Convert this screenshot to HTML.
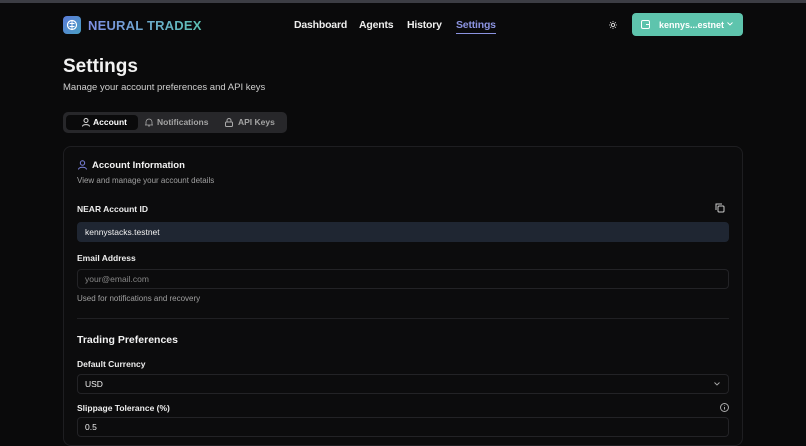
<!DOCTYPE html>
<html><head><style>
*{box-sizing:border-box;margin:0;padding:0}
body{width:806px;height:438px;overflow:hidden;background:#0a0a0b;font-family:"Liberation Sans",sans-serif;color:#f2f2f2;position:relative}
.top{position:absolute;left:0;top:0;width:806px;height:3px;background:#3c3d44}
.abs{position:absolute}
.logo{left:63px;top:16px;width:18px;height:18px;border-radius:4px;background:linear-gradient(135deg,#5b7bd8,#4a9fc4)}
.brand{left:88px;top:18px;font-size:13px;font-weight:bold;background:linear-gradient(90deg,#7f8ee6,#5cc3b3);-webkit-background-clip:text;color:transparent;letter-spacing:.2px}
.nav{top:19px;font-size:10.5px;color:#eee;font-weight:bold;letter-spacing:-.2px}
.btn{left:632px;top:13px;width:111px;height:23px;border-radius:4px;background:#5ec4ad;color:#fff;font-size:9px;font-weight:bold}
h1{position:absolute;left:63px;top:56px;font-size:19px;font-weight:bold}
.sub{left:63px;top:82px;font-size:9.5px;color:#cfcfcf}
.tabs{left:63px;top:112px;width:224px;height:21px;border-radius:5px;background:#27272a}
.tab{position:absolute;top:3px;height:15px;font-size:8.5px;line-height:15px;color:#a3a3a3;font-weight:bold}
.card{left:63px;top:146px;width:680px;height:300px;border:1px solid #1e1e21;border-radius:8px;background:#0c0c0d}
.lbl{font-size:8.5px;font-weight:bold;color:#eee}
.inp{left:77px;width:652px;height:20px;border:1px solid #232326;border-radius:4px;font-size:8.5px;line-height:18px;padding-left:7px}
.muted{font-size:8px;color:#a0a0a0}
</style></head><body>
<div class="top"></div>
<div class="abs logo"><svg width="18" height="18" viewBox="0 0 18 18"><circle cx="9" cy="9" r="4.5" fill="none" stroke="#fff" stroke-width="1.2"/><path d="M9 4.5v9M6.5 7.5h5M6.5 10.5h5" stroke="#fff" stroke-width=".9"/></svg></div>
<div class="abs brand">NEURAL TRADEX</div>
<div class="abs nav" style="left:294px">Dashboard</div>
<div class="abs nav" style="left:359px">Agents</div>
<div class="abs nav" style="left:407px">History</div>
<div class="abs nav" style="left:456px;color:#8b93e0;border-bottom:1px solid #8b93e0;padding-bottom:2px">Settings</div>
<svg class="abs" style="left:609px;top:21px" width="8" height="8" viewBox="0 0 8 8"><circle cx="4" cy="4" r="1.6" fill="none" stroke="#ddd" stroke-width=".9"/><path d="M4 0v1.3M4 6.7V8M0 4h1.3M6.7 4H8M1.2 1.2l.9.9M5.9 5.9l.9.9M1.2 6.8l.9-.9M5.9 2.1l.9-.9" stroke="#ddd" stroke-width=".8"/></svg>
<div class="abs btn">
<svg class="abs" style="left:9px;top:7px" width="9" height="9" viewBox="0 0 9 9"><rect x=".5" y=".5" width="8" height="8" rx="1.5" fill="none" stroke="#fff"/><path d="M5 4.5h3.5" stroke="#fff"/></svg>
<span class="abs" style="left:27px;top:7px">kennys...estnet</span>
<svg class="abs" style="left:95px;top:9px" width="6" height="4" viewBox="0 0 6 4"><path d="M.5.5L3 3 5.5.5" fill="none" stroke="#fff" stroke-width=".9"/></svg></div>
<h1>Settings</h1>
<div class="abs sub">Manage your account preferences and API keys</div>
<div class="abs tabs">
<div class="tab" style="left:3px;width:72px;background:#0a0a0b;border-radius:4px;color:#fff;padding-left:27px">Account
<svg class="abs" style="left:16px;top:3px" width="8" height="9" viewBox="0 0 8 9"><circle cx="4" cy="2.5" r="2" fill="none" stroke="#ddd"/><path d="M.5 8.5c0-2.5 7-2.5 7 0" fill="none" stroke="#ddd"/></svg></div>
<div class="tab" style="left:94px">Notifications</div>
<svg class="abs" style="left:82px;top:6px" width="8" height="9" viewBox="0 0 8 9"><path d="M1 6.5V4a3 3 0 0 1 6 0v2.5l.5.5h-7zM3 8h2" fill="none" stroke="#aaa" stroke-width=".8"/></svg>
<div class="tab" style="left:175px">API Keys</div>
<svg class="abs" style="left:162px;top:6px" width="8" height="9" viewBox="0 0 8 9"><rect x=".5" y="4" width="7" height="4.5" rx="1" fill="none" stroke="#aaa"/><path d="M2 4V2.5a2 2 0 0 1 4 0V4" fill="none" stroke="#aaa"/></svg>
</div>
<div class="abs card"></div>
<svg class="abs" style="left:78px;top:160px" width="9" height="10" viewBox="0 0 9 10"><circle cx="4.5" cy="3" r="2.2" fill="none" stroke="#7d84e0"/><path d="M.5 9.5c0-3 8-3 8 0" fill="none" stroke="#7d84e0"/></svg>
<div class="abs" style="left:92px;top:160px;font-size:9.5px;font-weight:bold">Account Information</div>
<div class="abs muted" style="left:77px;top:176px">View and manage your account details</div>
<div class="abs lbl" style="left:77px;top:204px">NEAR Account ID</div>
<svg class="abs" style="left:715px;top:203px" width="10" height="10" viewBox="0 0 10 10"><rect x="3" y="3" width="6" height="6" rx="1" fill="none" stroke="#ccc"/><path d="M1 7V1h6" fill="none" stroke="#ccc"/></svg>
<div class="abs inp" style="top:222px;background:#1f2632;border-color:#1f2632;color:#f2f2f2">kennystacks.testnet</div>
<div class="abs lbl" style="left:77px;top:253px">Email Address</div>
<div class="abs inp" style="top:269px;color:#888">your@email.com</div>
<div class="abs muted" style="left:77px;top:294px">Used for notifications and recovery</div>
<div class="abs" style="left:77px;top:318px;width:652px;height:1px;background:#202023"></div>
<div class="abs" style="left:77px;top:334px;font-size:10.5px;font-weight:bold">Trading Preferences</div>
<div class="abs lbl" style="left:77px;top:359px">Default Currency</div>
<div class="abs inp" style="top:374px">USD<svg class="abs" style="right:8px;top:7px" width="6" height="4" viewBox="0 0 6 4"><path d="M.5.5L3 3 5.5.5" fill="none" stroke="#aaa" stroke-width=".9"/></svg></div>
<div class="abs lbl" style="left:77px;top:403px">Slippage Tolerance (%)</div>
<svg class="abs" style="left:720px;top:403px" width="9" height="9" viewBox="0 0 9 9"><circle cx="4.5" cy="4.5" r="4" fill="none" stroke="#aaa"/><path d="M4.5 4v2.5M4.5 2.5v.5" stroke="#aaa"/></svg>
<div class="abs inp" style="top:417px">0.5</div>
</body></html>
